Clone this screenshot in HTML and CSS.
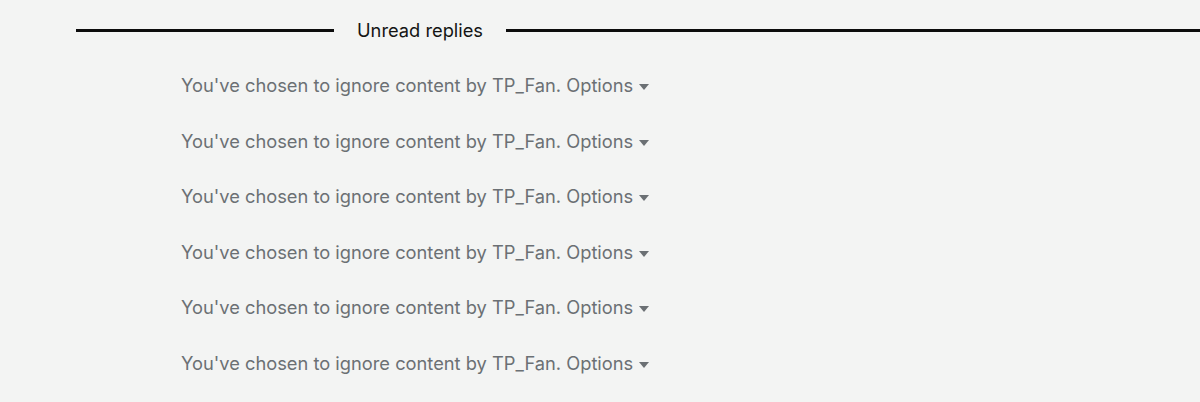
FILE: index.html
```html
<!DOCTYPE html>
<html>
<head>
<meta charset="utf-8">
<link rel="stylesheet" href="styles.css">
</head>
<body>
<div class="page">
  <div class="divider">
    <span class="line line-left"></span>
    <span class="divider-label">Unread replies</span>
    <span class="line line-right"></span>
  </div>
  <div class="list">
    <div class="ignored">You've chosen to ignore content by TP_Fan. <span class="opts">Options<svg class="caret" width="10" height="6" viewBox="0 0 10 6"><path d="M0 0H10L5 6Z" fill="currentColor"/></svg></span></div>
    <div class="ignored">You've chosen to ignore content by TP_Fan. <span class="opts">Options<svg class="caret" width="10" height="6" viewBox="0 0 10 6"><path d="M0 0H10L5 6Z" fill="currentColor"/></svg></span></div>
    <div class="ignored">You've chosen to ignore content by TP_Fan. <span class="opts">Options<svg class="caret" width="10" height="6" viewBox="0 0 10 6"><path d="M0 0H10L5 6Z" fill="currentColor"/></svg></span></div>
    <div class="ignored">You've chosen to ignore content by TP_Fan. <span class="opts">Options<svg class="caret" width="10" height="6" viewBox="0 0 10 6"><path d="M0 0H10L5 6Z" fill="currentColor"/></svg></span></div>
    <div class="ignored">You've chosen to ignore content by TP_Fan. <span class="opts">Options<svg class="caret" width="10" height="6" viewBox="0 0 10 6"><path d="M0 0H10L5 6Z" fill="currentColor"/></svg></span></div>
    <div class="ignored">You've chosen to ignore content by TP_Fan. <span class="opts">Options<svg class="caret" width="10" height="6" viewBox="0 0 10 6"><path d="M0 0H10L5 6Z" fill="currentColor"/></svg></span></div>
  </div>
</div>
</body>
</html>
```
FILE: styles.css
```css
html, body {
  margin: 0;
  padding: 0;
  background: #f3f4f3;
  font-family: Inter, "Noto Sans", sans-serif;
}
.page {
  padding-left: 76px;
}
.divider {
  display: flex;
  align-items: center;
  height: 60px;
}
.line {
  height: 3px;
  background: #0c0c0c;
}
.line-left {
  width: 258px;
}
.line-right {
  flex: 1;
}
.divider-label {
  padding: 0 23px;
  font-size: 18.3px;
  color: #141414;
}
.list {
  padding-left: 105px;
}
.ignored {
  height: 55.5px;
  line-height: 50px;
  font-size: 18.3px;
  color: #6b7074;
}
.opts {
  white-space: nowrap;
}
.caret {
  margin-left: 6px;
  vertical-align: 2px;
}
```
